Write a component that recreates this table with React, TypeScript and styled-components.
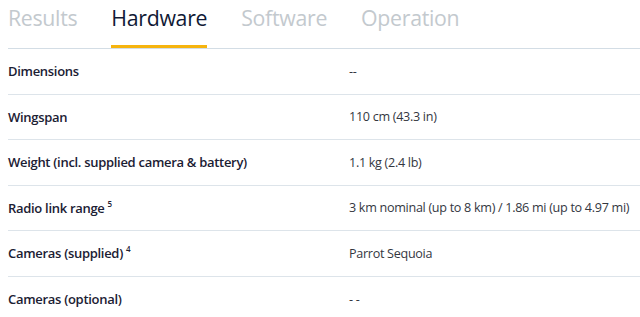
import React from "react";
import styled, { createGlobalStyle } from "styled-components";

const Global = createGlobalStyle`
  html, body { margin: 0; padding: 0; background: #fff; }
  body { font-family: "Open Sans", "Noto Sans", sans-serif; }
`;

const Page = styled.div`
  padding: 0 0 0 8px;
  width: 632px;
`;

const Tabs = styled.div`
  display: flex;
  gap: 34px;
  border-bottom: 1px solid #d3dde5;
  height: 48px;
  align-items: flex-end;
`;

const Tab = styled.div<{ $active?: boolean }>`
  font-size: 21.3px;
  line-height: 30px;
  color: ${(p) => (p.$active ? "#101935" : "#c3c9ce")};
  padding-bottom: 12px;
  border-bottom: 3px solid ${(p) => (p.$active ? "#f6b40e" : "transparent")};
  letter-spacing: -0.3px;
`;

const Table = styled.div`
  display: flex;
  flex-direction: column;
`;

const Row = styled.div<{ $last?: boolean }>`
  display: grid;
  grid-template-columns: 341px 1fr;
  height: 45.5px;
  align-items: center;
  border-bottom: ${(p) => (p.$last ? "none" : "1px solid #dde4ea")};
  box-sizing: border-box;
`;

const Label = styled.div`
  font-size: 13px;
  font-weight: 600;
  color: #1b2033;
  letter-spacing: -0.3px;
`;

const Value = styled.div`
  font-size: 12.6px;
  color: #34373f;
  letter-spacing: -0.3px;
  white-space: nowrap;
`;

const Sup = styled.sup`
  font-size: 8px;
  margin-left: 3px;
  vertical-align: 6px;
  line-height: 0;
`;

const rows: { label: string; sup?: string; value: string }[] = [
  { label: "Dimensions", value: "--" },
  { label: "Wingspan", value: "110 cm (43.3 in)" },
  { label: "Weight (incl. supplied camera & battery)", value: "1.1 kg (2.4 lb)" },
  { label: "Radio link range", sup: "5", value: "3 km nominal (up to 8 km) / 1.86 mi (up to 4.97 mi)" },
  { label: "Cameras (supplied)", sup: "4", value: "Parrot Sequoia" },
  { label: "Cameras (optional)", value: "- -" },
];

export default function App() {
  return (
    <Page>
      <Global />
      <Tabs>
        <Tab>Results</Tab>
        <Tab $active>Hardware</Tab>
        <Tab>Software</Tab>
        <Tab>Operation</Tab>
      </Tabs>
      <Table>
        {rows.map((r, i) => (
          <Row key={r.label} $last={i === rows.length - 1}>
            <Label>
              {r.label}
              {r.sup && <Sup>{r.sup}</Sup>}
            </Label>
            <Value>{r.value}</Value>
          </Row>
        ))}
      </Table>
    </Page>
  );
}
